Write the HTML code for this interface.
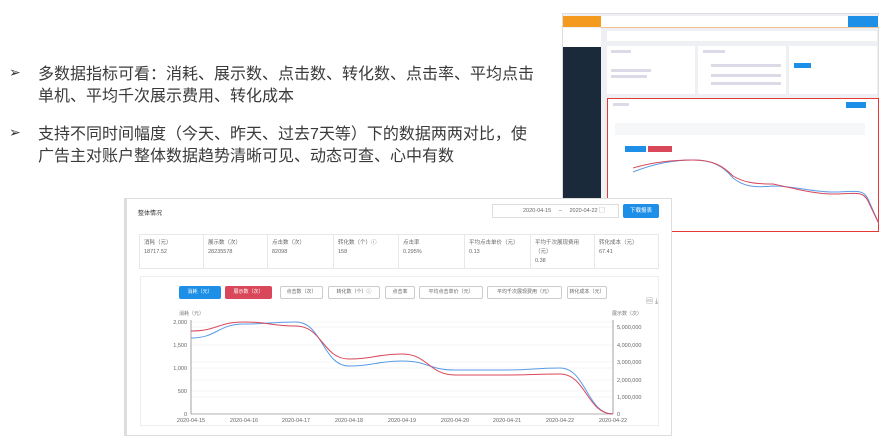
<!DOCTYPE html>
<html><head><meta charset="utf-8"><style>
*{margin:0;padding:0;box-sizing:border-box}
body{width:879px;height:440px;background:#fff;position:relative;overflow:hidden;font-family:"Liberation Sans","Noto Sans CJK SC",sans-serif;color:#333}
.a{position:absolute}
.p{font-size:16px;line-height:22px;color:#3a3a3a;left:38px;width:518px}
.b{left:9px;font-size:14px;color:#333}
.t{font-size:5px;color:#777;white-space:nowrap}
.s{font-size:6px;color:#666;white-space:nowrap}
.cell{position:absolute;top:234px;height:35px;border-right:1px solid #e8e8e8;padding:5px 4px;font-size:5.5px;color:#666;line-height:9px}
.btn{position:absolute;top:286px;height:13px;border:1px solid #ccc;border-radius:2px;font-size:5px;color:#666;text-align:center;line-height:11px;background:#fff}
.g{position:absolute;height:3px;background:#ccd;opacity:.7}
</style></head><body>
<div class="a b" style="top:64px">➢</div>
<div class="a p" style="top:64px">多数据指标可看：消耗、展示数、点击数、转化数、点击率、平均点击<br>单机、平均千次展示费用、转化成本</div>
<div class="a b" style="top:124px">➢</div>
<div class="a p" style="top:124px">支持不同时间幅度（今天、昨天、过去7天等）下的数据两两对比，使<br>广告主对账户整体数据趋势清晰可见、动态可查、心中有数</div>

<!-- right screenshot -->
<div class="a" style="left:562px;top:13px;width:317px;height:218px;background:#eef0f3;border:1px solid #ddd">
 <div class="a" style="left:0;top:2px;width:38px;height:11px;background:#f39a1f"></div>
 <div class="a" style="left:38px;top:2px;width:279px;height:12px;background:#fff;border-bottom:1px solid #f2c08a"></div>
 <div class="a" style="left:285px;top:2px;width:30px;height:11px;background:#1e8fe6"></div>
 <div class="a" style="left:0;top:14px;width:38px;height:19px;background:#fff"></div>
 <div class="a" style="left:0;top:33px;width:38px;height:185px;background:#1b2a3a"></div>
 <div class="a" style="left:44px;top:17px;width:270px;height:10px;background:#fff"></div>
 <div class="a" style="left:44px;top:32px;width:88px;height:48px;background:#fff"></div>
 <div class="a" style="left:135px;top:32px;width:88px;height:48px;background:#fff"></div>
 <div class="a" style="left:226px;top:32px;width:88px;height:48px;background:#fff"></div>
 <div class="g" style="left:48px;top:36px;width:20px"></div>
 <div class="g" style="left:48px;top:55px;width:40px"></div>
 <div class="g" style="left:48px;top:61px;width:36px"></div>
 <div class="g" style="left:140px;top:36px;width:22px"></div>
 <div class="g" style="left:148px;top:50px;width:70px"></div>
 <div class="g" style="left:148px;top:60px;width:70px"></div>
 <div class="g" style="left:148px;top:68px;width:70px"></div>
 <div class="a" style="left:231px;top:49px;width:17px;height:5px;background:#1e8fe6"></div>
 <div class="a" style="left:44px;top:84px;width:272px;height:134px;background:#fff;border:1.5px solid #e53935"></div>
 <div class="g" style="left:50px;top:89px;width:16px"></div>
 <div class="g" style="left:52px;top:109px;width:250px;height:12px;background:#f2f3f5"></div>
 <div class="a" style="left:283px;top:88px;width:20px;height:6px;background:#1e8fe6"></div>
 <div class="a" style="left:62px;top:132px;width:21px;height:6px;background:#1e8fe6"></div>
 <div class="a" style="left:85px;top:132px;width:24px;height:6px;background:#d9475a"></div>
 <svg class="a" style="left:70px;top:140px" width="247" height="75"><path d="M0 18 C20 10 40 6 60 6 C80 6 90 12 100 24 C110 32 120 34 140 32 C160 32 180 38 200 38 C220 38 230 34 235 45 L247 72" fill="none" stroke="#5b9be8" stroke-width="1"/><path d="M0 14 C20 8 40 6 60 6 C80 6 90 12 100 22 C110 28 120 30 140 30 C160 34 180 40 200 40 C220 40 230 36 235 47 L247 72" fill="none" stroke="#d9475a" stroke-width="1"/></svg>
</div>

<!-- main card -->
<div class="a" style="left:124px;top:198px;width:548px;height:238px;background:#fff;border:1px solid #ddd;border-left:3px solid #ddd"></div>
<div class="a s" style="left:138px;top:208px;color:#333">整体情况</div>
<div class="a" style="left:492px;top:204px;width:127px;height:14px;border:1px solid #ddd;font-size:5.5px;color:#666;line-height:12px;padding-left:30px;white-space:nowrap">2020-04-15 &nbsp;&nbsp;&nbsp;&nbsp;– &nbsp;&nbsp;&nbsp;&nbsp;2020-04-22 ▢</div>
<div class="a" style="left:623px;top:204px;width:36px;height:14px;background:#1e8fe6;color:#fff;font-size:5.5px;text-align:center;line-height:14px;border-radius:2px">下载报表</div>
<div class="a" style="left:139px;top:234px;width:520px;height:35px;border:1px solid #e8e8e8"></div>
<div class="cell" style="left:140px;width:64px">消耗（元）<br>18717.52</div>
<div class="cell" style="left:204px;width:64px">展示数（次）<br>28235578</div>
<div class="cell" style="left:268px;width:66px">点击数（次）<br>82098</div>
<div class="cell" style="left:334px;width:65px">转化数（个）ⓘ<br>158</div>
<div class="cell" style="left:399px;width:66px">点击率<br>0.295%</div>
<div class="cell" style="left:465px;width:66px">平均点击单价（元）<br>0.13</div>
<div class="cell" style="left:531px;width:64px">平均千次展现费用<br>（元）<br>0.38</div>
<div class="cell" style="left:595px;width:64px;border-right:none">转化成本（元）<br>67.41</div>
<div class="a" style="left:140px;top:276px;width:519px;height:150px;border:1px solid #eee"></div>
<div class="btn" style="left:179px;width:42px;background:#1e8fe6;border-color:#1e8fe6;color:#fff">消耗（元）</div>
<div class="btn" style="left:225px;width:47px;background:#d9475a;border-color:#d9475a;color:#fff">展示数（次）</div>
<div class="btn" style="left:280px;width:43px">点击数（次）</div>
<div class="btn" style="left:328px;width:52px">转化数（个）ⓘ</div>
<div class="btn" style="left:385px;width:30px">点击率</div>
<div class="btn" style="left:419px;width:64px">平均点击单价（元）</div>
<div class="btn" style="left:487px;width:75px">平均千次展现费用（元）</div>
<div class="btn" style="left:567px;width:40px">转化成本（元）</div>
<div class="a t" style="left:646px;top:296px;font-size:7px">▤ ⤓</div>
<div class="a t" style="left:179px;top:310px">消耗（元）</div>
<div class="a t" style="left:612px;top:310px">展示数（次）</div>
<svg class="a" style="left:0;top:0" width="879" height="440">
<g stroke="#ececec" stroke-width="0.6">
<line x1="191" y1="322" x2="613" y2="322"/><line x1="191" y1="345" x2="613" y2="345"/><line x1="191" y1="368" x2="613" y2="368"/><line x1="191" y1="391" x2="613" y2="391"/>
<line x1="191" y1="327" x2="613" y2="327"/><line x1="191" y1="362" x2="613" y2="362"/><line x1="191" y1="380" x2="613" y2="380"/><line x1="191" y1="397" x2="613" y2="397"/>
</g>
<line x1="191" y1="320" x2="191" y2="414" stroke="#666" stroke-width="0.6"/>
<line x1="613" y1="320" x2="613" y2="414" stroke="#666" stroke-width="0.6"/>
<line x1="191" y1="414" x2="613" y2="414" stroke="#666" stroke-width="0.6"/>
<path d="M191 338 C217 338 218 324 244 324 C270 324 270 322 296 322 C322 322 323 366 349 366 C375 366 376 361 402 361 C428 361 429 370 455 370 C481 370 481 370 507 370 C533 370 534 368 560 368 C586 368 587 414 613 414" fill="none" stroke="#5b9be8" stroke-width="1"/>
<path d="M191 331 C217 331 218 322 244 322 C270 322 270 326 296 326 C322 326 323 359 349 359 C375 359 376 354 402 354 C428 354 429 375 455 375 C481 375 481 375 507 375 C533 375 534 374 560 374 C586 374 587 414 613 414" fill="none" stroke="#d9475a" stroke-width="1"/>
<g font-size="5.5" fill="#666" font-family="Liberation Sans,sans-serif">
<text x="187" y="324" text-anchor="end">2,000</text><text x="187" y="347" text-anchor="end">1,500</text><text x="187" y="370" text-anchor="end">1,000</text><text x="187" y="393" text-anchor="end">500</text><text x="187" y="416" text-anchor="end">0</text>
<text x="617" y="329">5,000,000</text><text x="617" y="347">4,000,000</text><text x="617" y="364">3,000,000</text><text x="617" y="382">2,000,000</text><text x="617" y="399">1,000,000</text><text x="617" y="416">0</text>
<g text-anchor="middle"><text x="191" y="422">2020-04-15</text><text x="244" y="422">2020-04-16</text><text x="296" y="422">2020-04-17</text><text x="349" y="422">2020-04-18</text><text x="402" y="422">2020-04-19</text><text x="455" y="422">2020-04-20</text><text x="507" y="422">2020-04-21</text><text x="560" y="422">2020-04-22</text><text x="613" y="422">2020-04-22</text></g>
</g>
</svg>
</body></html>
